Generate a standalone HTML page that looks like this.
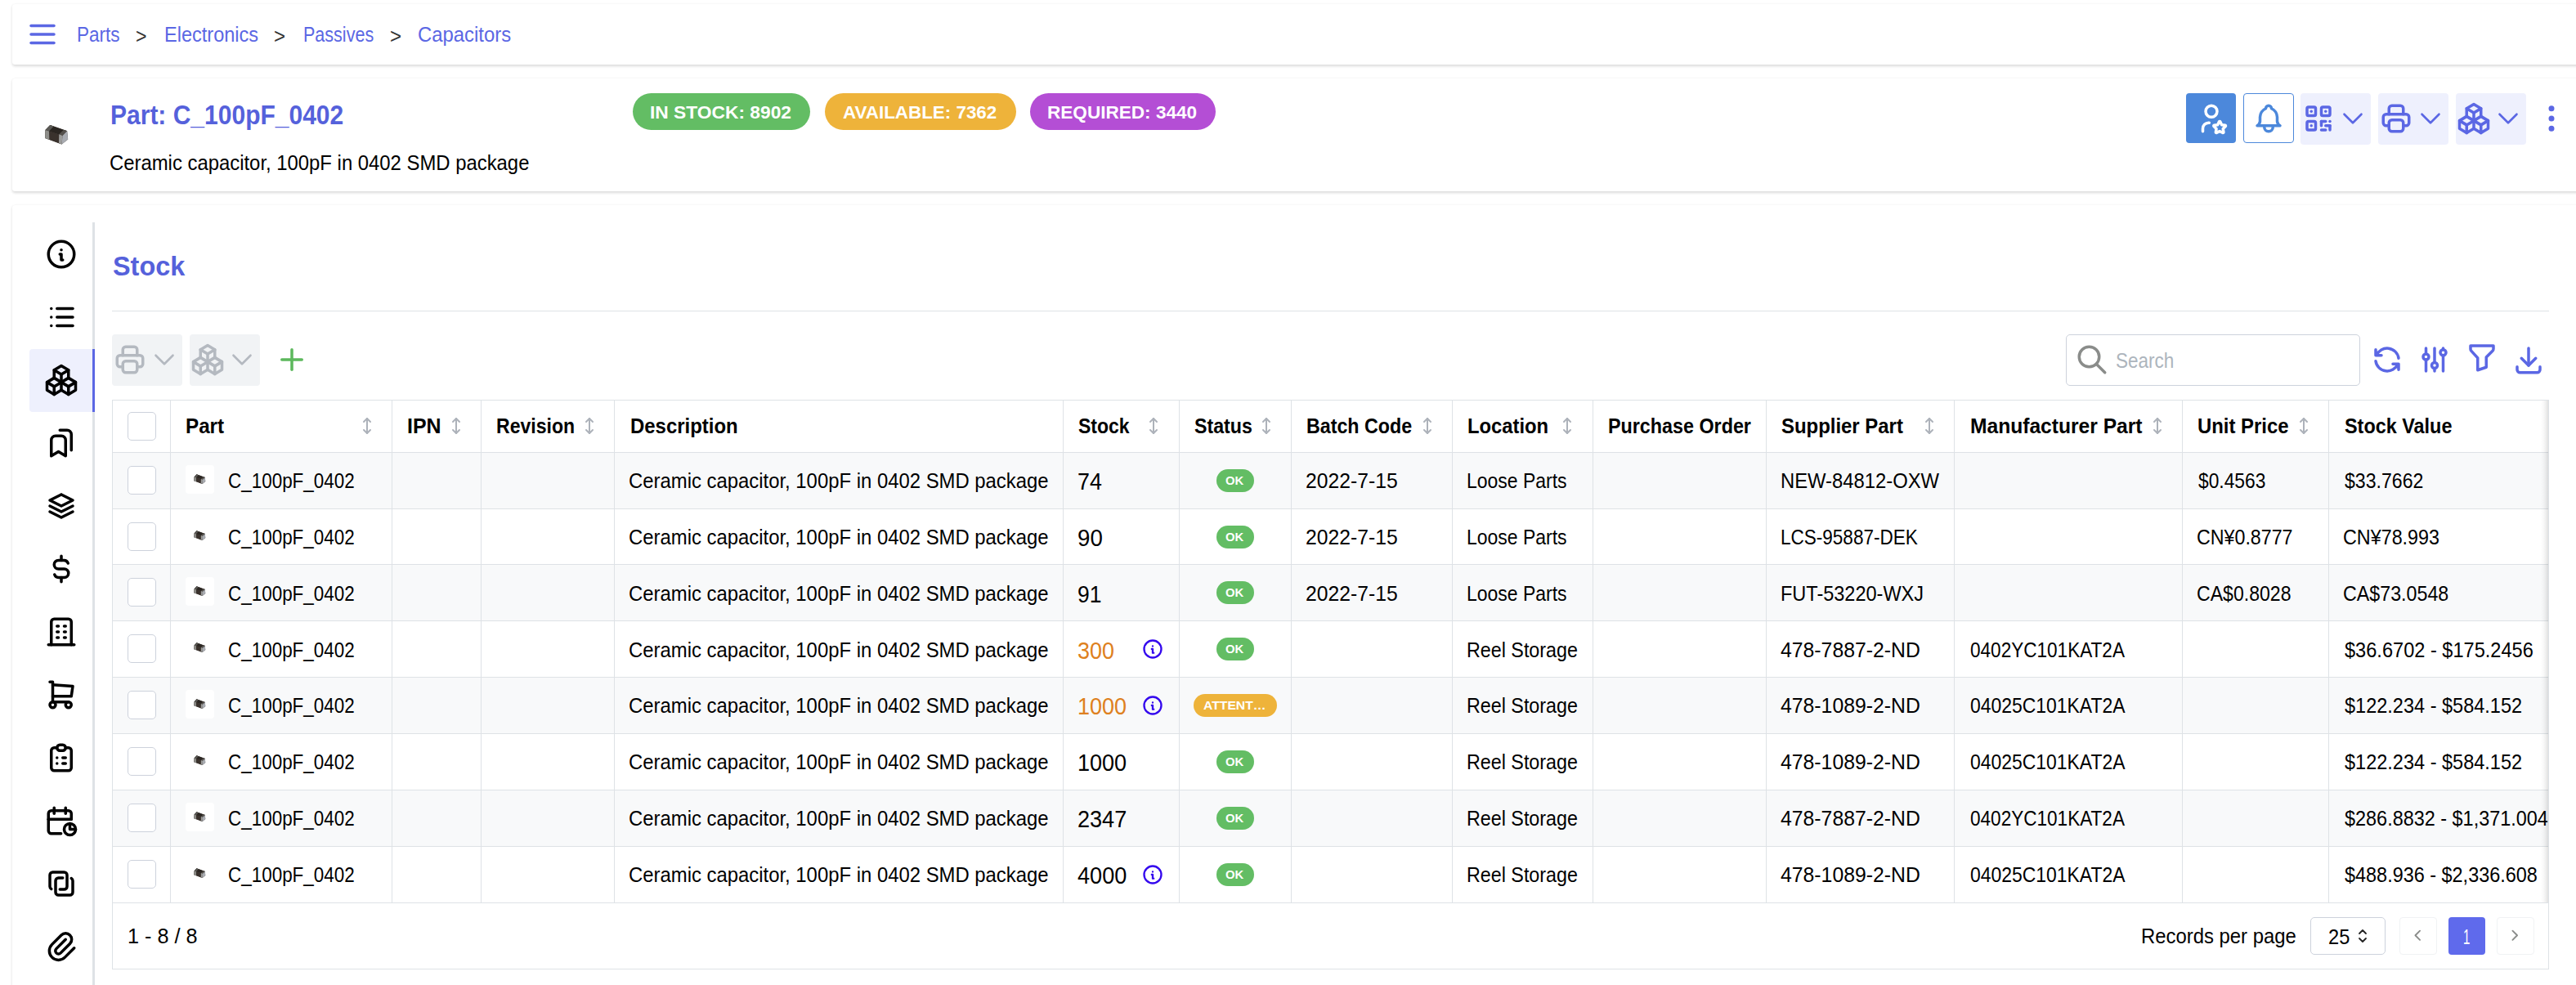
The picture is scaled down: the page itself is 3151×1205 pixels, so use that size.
<!DOCTYPE html>
<html lang="en"><head><meta charset="utf-8"><title>Part: C_100pF_0402 | Stock</title>
<style>
html,body{margin:0;padding:0}
html{background:#fff}
body{width:3151px;height:1205px;background:#fff;font-family:"Liberation Sans",sans-serif;color:#000}
#app{position:relative;width:3151px;height:1205px;overflow:hidden;background:#fff}
.t{position:absolute;white-space:nowrap;transform-origin:0 0;display:block}
.ic{position:absolute;display:block;overflow:visible}
.b{position:absolute;box-sizing:border-box}
.paper{position:absolute;background:#fff;border-radius:3.5px;box-shadow:0 1.5px 4.5px rgba(0,0,0,.05),0 1.5px 3px rgba(0,0,0,.1)}
</style></head><body><div id="app">

<div class="paper" style="left:15.2px;top:4.6px;width:3200px;height:74.2px"></div>
<div class="paper" style="left:15.2px;top:95.8px;width:3200px;height:138px"></div>
<div class="paper" style="left:15.2px;top:251.3px;width:3200px;height:1000px"></div>
<nav>
<svg class="ic" style="left:30.75px;top:21.00px" width="42.00" height="42.00" viewBox="0 0 24 24" fill="none" stroke="#5b67e4" stroke-width="2" stroke-linecap="round" stroke-linejoin="round"><path d="M4 6l16 0"/><path d="M4 12l16 0"/><path d="M4 18l16 0"/></svg>
<span class="t" style="left:93.70px;top:30px;font-size:25px;line-height:25px;color:#5b67e4;transform:scaleX(0.9006)">Parts</span>
<span class="t" style="left:166.08px;top:32px;font-size:25px;line-height:25px;color:#333;transform:scaleX(0.9231)">&gt;</span>
<span class="t" style="left:200.72px;top:30px;font-size:25px;line-height:25px;color:#5b67e4;transform:scaleX(0.9410)">Electronics</span>
<span class="t" style="left:335.34px;top:32px;font-size:25px;line-height:25px;color:#333;transform:scaleX(0.9615)">&gt;</span>
<span class="t" style="left:370.88px;top:30px;font-size:25px;line-height:25px;color:#5b67e4;transform:scaleX(0.8612)">Passives</span>
<span class="t" style="left:476.54px;top:32px;font-size:25px;line-height:25px;color:#333;transform:scaleX(0.9615)">&gt;</span>
<span class="t" style="left:510.54px;top:30px;font-size:25px;line-height:25px;color:#5b67e4;transform:scaleX(0.9551)">Capacitors</span>
</nav>
<header>
<svg class="ic" style="left:40.00px;top:140.00px" width="60.00" height="50.00" viewBox="0 0 60 50"><polygon points="21.32,12.94 42.13,20.30 43.15,30.46 35.53,36.55 15.23,28.93 15.23,19.04" fill="#4a4540"/><polygon points="21.32,12.94 42.13,20.30 36.55,25.89 15.74,19.04" fill="#2b2622"/><polygon points="21.32,12.94 25.63,14.47 20.05,20.56 15.74,19.04" fill="#5b5a56"/><polygon points="37.82,18.78 42.13,20.30 36.55,25.89 32.23,24.37" fill="#54504b"/><polygon points="15.74,19.04 36.55,25.89 35.53,36.55 15.23,28.93" fill="#3a322d"/><polygon points="15.23,19.04 20.05,20.56 20.30,30.96 15.23,28.93" fill="#8e8e8a"/><polygon points="32.23,24.37 36.55,25.89 35.53,36.55 31.98,35.03" fill="#9c9c9a"/><polygon points="36.55,25.89 42.13,20.30 43.15,30.46 35.53,36.55" fill="#a9acb2"/></svg>
<div class="b" style="left:774.00px;top:113.75px;width:217.00px;height:45.00px;background:#63bd64;border-radius:23px"></div>
<div class="b" style="left:1009.00px;top:113.75px;width:233.90px;height:45.00px;background:#eeb33a;border-radius:23px"></div>
<div class="b" style="left:1260.20px;top:113.75px;width:226.55px;height:45.00px;background:#b44ed5;border-radius:23px"></div>
<div class="b" style="left:2674.00px;top:113.90px;width:61.00px;height:61.10px;background:#4c88db;border-radius:4px"></div>
<svg class="ic" style="left:2683.50px;top:124.00px" width="42.00" height="42.00" viewBox="0 0 24 24" fill="none" stroke="#fff" stroke-width="2" stroke-linecap="round" stroke-linejoin="round"><path d="M8 7a4 4 0 1 0 8 0a4 4 0 0 0 -8 0"/><path d="M6 21v-2a4 4 0 0 1 4 -4h.5"/><path d="M17.8 20.817l-2.172 1.138a.392 .392 0 0 1 -.568 -.41l.415 -2.411l-1.757 -1.707a.389 .389 0 0 1 .217 -.665l2.428 -.352l1.086 -2.193a.392 .392 0 0 1 .702 0l1.086 2.193l2.428 .352a.39 .39 0 0 1 .217 .665l-1.757 1.707l.414 2.41a.39 .39 0 0 1 -.567 .411l-2.172 -1.138z"/></svg>
<div class="b" style="left:2744.00px;top:113.90px;width:62.00px;height:61.10px;background:#fff;border:1.5px solid #4c88db;border-radius:4px"></div>
<svg class="ic" style="left:2754.00px;top:124.00px" width="42.00" height="42.00" viewBox="0 0 24 24" fill="none" stroke="#4c88db" stroke-width="2" stroke-linecap="round" stroke-linejoin="round"><path d="M10 5a2 2 0 1 1 4 0a7 7 0 0 1 4 6v3a4 4 0 0 0 2 3h-16a4 4 0 0 0 2 -3v-3a7 7 0 0 1 4 -6"/><path d="M9 17v1a3 3 0 0 0 6 0v-1"/></svg>
<div class="b" style="left:2814.00px;top:113.75px;width:86.00px;height:63.00px;background:#eef0fd;border-radius:4px"></div>
<svg class="ic" style="left:2815.00px;top:124.00px" width="42.00" height="42.00" viewBox="0 0 24 24" fill="none" stroke="#5b67e4" stroke-width="2" stroke-linecap="round" stroke-linejoin="round"><path d="M4 4m0 1a1 1 0 0 1 1 -1h4a1 1 0 0 1 1 1v4a1 1 0 0 1 -1 1h-4a1 1 0 0 1 -1 -1z"/><path d="M7 17l0 .01"/><path d="M14 4m0 1a1 1 0 0 1 1 -1h4a1 1 0 0 1 1 1v4a1 1 0 0 1 -1 1h-4a1 1 0 0 1 -1 -1z"/><path d="M7 7l0 .01"/><path d="M4 14m0 1a1 1 0 0 1 1 -1h4a1 1 0 0 1 1 1v4a1 1 0 0 1 -1 1h-4a1 1 0 0 1 -1 -1z"/><path d="M17 7l0 .01"/><path d="M14 14l3 0"/><path d="M20 14l0 .01"/><path d="M14 14l0 3"/><path d="M14 20l3 0"/><path d="M17 17l3 0"/><path d="M20 17l0 3"/></svg>
<svg class="ic" style="left:2856.80px;top:124.00px" width="42.00" height="42.00" viewBox="0 0 24 24" fill="none" stroke="#5b67e4" stroke-width="1.5" stroke-linecap="round" stroke-linejoin="round"><path d="M6 9l6 6l6 -6"/></svg>
<div class="b" style="left:2909.00px;top:113.75px;width:86.00px;height:63.00px;background:#eef0fd;border-radius:4px"></div>
<svg class="ic" style="left:2910.00px;top:124.00px" width="42.00" height="42.00" viewBox="0 0 24 24" fill="none" stroke="#5b67e4" stroke-width="2" stroke-linecap="round" stroke-linejoin="round"><path d="M17 17h2a2 2 0 0 0 2 -2v-4a2 2 0 0 0 -2 -2h-14a2 2 0 0 0 -2 2v4a2 2 0 0 0 2 2h2"/><path d="M17 9v-4a2 2 0 0 0 -2 -2h-6a2 2 0 0 0 -2 2v4"/><path d="M7 13m0 2a2 2 0 0 1 2 -2h6a2 2 0 0 1 2 2v4a2 2 0 0 1 -2 2h-6a2 2 0 0 1 -2 -2z"/></svg>
<svg class="ic" style="left:2951.80px;top:124.00px" width="42.00" height="42.00" viewBox="0 0 24 24" fill="none" stroke="#5b67e4" stroke-width="1.5" stroke-linecap="round" stroke-linejoin="round"><path d="M6 9l6 6l6 -6"/></svg>
<div class="b" style="left:3004.00px;top:113.75px;width:86.00px;height:63.00px;background:#eef0fd;border-radius:4px"></div>
<svg class="ic" style="left:3005.00px;top:124.00px" width="42.00" height="42.00" viewBox="0 0 24 24" fill="none" stroke="#5b67e4" stroke-width="2" stroke-linecap="round" stroke-linejoin="round"><path d="M7 16.5l-5 -3l5 -3l5 3v5.5l-5 3z"/><path d="M2 13.5v5.5l5 3"/><path d="M7 16.545l5 -3.03"/><path d="M17 16.5l-5 -3l5 -3l5 3v5.5l-5 3z"/><path d="M12 19l5 3"/><path d="M17 16.5l5 -3"/><path d="M12 13.5v-5.5l-5 -3l5 -3l5 3v5.5"/><path d="M7 5.03v5.455"/><path d="M12 8l5 -3"/></svg>
<svg class="ic" style="left:3046.80px;top:124.00px" width="42.00" height="42.00" viewBox="0 0 24 24" fill="none" stroke="#5b67e4" stroke-width="1.5" stroke-linecap="round" stroke-linejoin="round"><path d="M6 9l6 6l6 -6"/></svg>
<svg class="ic" style="left:3099.75px;top:124.00px" width="42.00" height="42.00" viewBox="0 0 24 24" fill="none" stroke="#5b67e4" stroke-width="2" stroke-linecap="round" stroke-linejoin="round"><path d="M12 12m-1 0a1 1 0 1 0 2 0a1 1 0 1 0 -2 0"/><path d="M12 19m-1 0a1 1 0 1 0 2 0a1 1 0 1 0 -2 0"/><path d="M12 5m-1 0a1 1 0 1 0 2 0a1 1 0 1 0 -2 0"/></svg>
<span class="t" style="left:134.58px;top:124px;font-size:33px;line-height:33px;font-weight:700;color:#5561db;transform:scaleX(0.9093)">Part: C_100pF_0402</span>
<span class="t" style="left:133.55px;top:187px;font-size:25px;line-height:25px;transform:scaleX(0.9547)">Ceramic capacitor, 100pF in 0402 SMD package</span>
<span class="t" style="left:795.46px;top:127px;font-size:22px;line-height:22px;font-weight:700;color:#fff;transform:scaleX(1.0352)">IN STOCK: 8902</span>
<span class="t" style="left:1031.00px;top:127px;font-size:22px;line-height:22px;font-weight:700;color:#fff;transform:scaleX(1.0175)">AVAILABLE: 7362</span>
<span class="t" style="left:1281.47px;top:127px;font-size:22px;line-height:22px;font-weight:700;color:#fff;transform:scaleX(1.0256)">REQUIRED: 3440</span>
</header>
<aside>
<div class="b" style="left:113.00px;top:272.00px;width:3.00px;height:988.00px;background:#dee2e6"></div>
<div class="b" style="left:36.00px;top:427.00px;width:77.00px;height:77.00px;background:#eef0fd;border-radius:4px 0 0 4px"></div>
<div class="b" style="left:113.00px;top:427.00px;width:3.00px;height:77.00px;background:#5b67e4"></div>
<svg class="ic" style="left:54.00px;top:289.60px" width="42.00" height="42.00" viewBox="0 0 24 24" fill="none" stroke="#000" stroke-width="2" stroke-linecap="round" stroke-linejoin="round"><path d="M3 12a9 9 0 1 0 18 0a9 9 0 0 0 -18 0"/><path d="M12 9h.01"/><path d="M11 12h1v4h1"/></svg>
<svg class="ic" style="left:54.00px;top:366.67px" width="42.00" height="42.00" viewBox="0 0 24 24" fill="none" stroke="#000" stroke-width="2" stroke-linecap="round" stroke-linejoin="round"><path d="M9 6l11 0"/><path d="M9 12l11 0"/><path d="M9 18l11 0"/><path d="M5 6l0 .01"/><path d="M5 12l0 .01"/><path d="M5 18l0 .01"/></svg>
<svg class="ic" style="left:54.00px;top:443.74px" width="42.00" height="42.00" viewBox="0 0 24 24" fill="none" stroke="#000" stroke-width="2" stroke-linecap="round" stroke-linejoin="round"><path d="M7 16.5l-5 -3l5 -3l5 3v5.5l-5 3z"/><path d="M2 13.5v5.5l5 3"/><path d="M7 16.545l5 -3.03"/><path d="M17 16.5l-5 -3l5 -3l5 3v5.5l-5 3z"/><path d="M12 19l5 3"/><path d="M17 16.5l5 -3"/><path d="M12 13.5v-5.5l-5 -3l5 -3l5 3v5.5"/><path d="M7 5.03v5.455"/><path d="M12 8l5 -3"/></svg>
<svg class="ic" style="left:54.00px;top:520.81px" width="42.00" height="42.00" viewBox="0 0 24 24" fill="none" stroke="#000" stroke-width="2" stroke-linecap="round" stroke-linejoin="round"><path d="M15 10v11l-5 -3l-5 3v-11a3 3 0 0 1 3 -3h4a3 3 0 0 1 3 3z"/><path d="M11 3h5a3 3 0 0 1 3 3v11"/></svg>
<svg class="ic" style="left:54.00px;top:597.88px" width="42.00" height="42.00" viewBox="0 0 24 24" fill="none" stroke="#000" stroke-width="2" stroke-linecap="round" stroke-linejoin="round"><path d="M12 4l-8 4l8 4l8 -4l-8 -4"/><path d="M4 12l8 4l8 -4"/><path d="M4 16l8 4l8 -4"/></svg>
<svg class="ic" style="left:54.00px;top:674.95px" width="42.00" height="42.00" viewBox="0 0 24 24" fill="none" stroke="#000" stroke-width="2" stroke-linecap="round" stroke-linejoin="round"><path d="M16.7 8a3 3 0 0 0 -2.7 -2h-4a3 3 0 0 0 0 6h4a3 3 0 0 1 0 6h-4a3 3 0 0 1 -2.7 -2"/><path d="M12 3v3m0 12v3"/></svg>
<svg class="ic" style="left:54.00px;top:752.02px" width="42.00" height="42.00" viewBox="0 0 24 24" fill="none" stroke="#000" stroke-width="2" stroke-linecap="round" stroke-linejoin="round"><path d="M3 21l18 0"/><path d="M9 8l1 0"/><path d="M9 12l1 0"/><path d="M9 16l1 0"/><path d="M14 8l1 0"/><path d="M14 12l1 0"/><path d="M14 16l1 0"/><path d="M5 21v-16a2 2 0 0 1 2 -2h10a2 2 0 0 1 2 2v16"/></svg>
<svg class="ic" style="left:54.00px;top:829.09px" width="42.00" height="42.00" viewBox="0 0 24 24" fill="none" stroke="#000" stroke-width="2" stroke-linecap="round" stroke-linejoin="round"><path d="M6 19m-2 0a2 2 0 1 0 4 0a2 2 0 1 0 -4 0"/><path d="M17 19m-2 0a2 2 0 1 0 4 0a2 2 0 1 0 -4 0"/><path d="M17 17h-11v-14h-2"/><path d="M6 5l14 1l-1 7h-13"/></svg>
<svg class="ic" style="left:54.00px;top:906.16px" width="42.00" height="42.00" viewBox="0 0 24 24" fill="none" stroke="#000" stroke-width="2" stroke-linecap="round" stroke-linejoin="round"><path d="M9 5h-2a2 2 0 0 0 -2 2v12a2 2 0 0 0 2 2h10a2 2 0 0 0 2 -2v-12a2 2 0 0 0 -2 -2h-2"/><path d="M9 3m0 2a2 2 0 0 1 2 -2h2a2 2 0 0 1 2 2v0a2 2 0 0 1 -2 2h-2a2 2 0 0 1 -2 -2z"/><path d="M9 12l.01 0"/><path d="M13 12l2 0"/><path d="M9 16l.01 0"/><path d="M13 16l2 0"/></svg>
<svg class="ic" style="left:54.00px;top:983.23px" width="42.00" height="42.00" viewBox="0 0 24 24" fill="none" stroke="#000" stroke-width="2" stroke-linecap="round" stroke-linejoin="round"><path d="M11.795 21h-6.795a2 2 0 0 1 -2 -2v-12a2 2 0 0 1 2 -2h12a2 2 0 0 1 2 2v4"/><path d="M18 14v4h4"/><path d="M18 18m-4 0a4 4 0 1 0 8 0a4 4 0 1 0 -8 0"/><path d="M15 3v4"/><path d="M7 3v4"/><path d="M3 11h16"/></svg>
<svg class="ic" style="left:54.00px;top:1060.30px" width="42.00" height="42.00" viewBox="0 0 24 24" fill="none" stroke="#000" stroke-width="2" stroke-linecap="round" stroke-linejoin="round"><path d="M19 8.268a2 2 0 0 1 1 1.732v8a2 2 0 0 1 -2 2h-8a2 2 0 0 1 -2 -2v-8a2 2 0 0 1 2 -2h3"/><path d="M5 15.734a2 2 0 0 1 -1 -1.734v-8a2 2 0 0 1 2 -2h8a2 2 0 0 1 2 2v8a2 2 0 0 1 -2 2h-3"/></svg>
<svg class="ic" style="left:54.00px;top:1137.37px" width="42.00" height="42.00" viewBox="0 0 24 24" fill="none" stroke="#000" stroke-width="2" stroke-linecap="round" stroke-linejoin="round"><path d="M15 7l-6.5 6.5a1.5 1.5 0 0 0 3 3l6.5 -6.5a3 3 0 0 0 -6 -6l-6.5 6.5a4.5 4.5 0 0 0 9 9l6.5 -6.5"/></svg>
</aside>
<main>
<div class="b" style="left:137.00px;top:380.00px;width:2981.00px;height:1.00px;background:#dee2e6"></div>
<div class="b" style="left:137.00px;top:409.00px;width:86.00px;height:62.75px;background:#f1f3f5;border-radius:4px"></div>
<svg class="ic" style="left:138.00px;top:419.00px" width="42.00" height="42.00" viewBox="0 0 24 24" fill="none" stroke="#b4b9c0" stroke-width="2" stroke-linecap="round" stroke-linejoin="round"><path d="M17 17h2a2 2 0 0 0 2 -2v-4a2 2 0 0 0 -2 -2h-14a2 2 0 0 0 -2 2v4a2 2 0 0 0 2 2h2"/><path d="M17 9v-4a2 2 0 0 0 -2 -2h-6a2 2 0 0 0 -2 2v4"/><path d="M7 13m0 2a2 2 0 0 1 2 -2h6a2 2 0 0 1 2 2v4a2 2 0 0 1 -2 2h-6a2 2 0 0 1 -2 -2z"/></svg>
<svg class="ic" style="left:179.90px;top:419.00px" width="42.00" height="42.00" viewBox="0 0 24 24" fill="none" stroke="#b4b9c0" stroke-width="1.5" stroke-linecap="round" stroke-linejoin="round"><path d="M6 9l6 6l6 -6"/></svg>
<div class="b" style="left:232.00px;top:409.00px;width:86.00px;height:62.75px;background:#f1f3f5;border-radius:4px"></div>
<svg class="ic" style="left:233.00px;top:419.00px" width="42.00" height="42.00" viewBox="0 0 24 24" fill="none" stroke="#b4b9c0" stroke-width="2" stroke-linecap="round" stroke-linejoin="round"><path d="M7 16.5l-5 -3l5 -3l5 3v5.5l-5 3z"/><path d="M2 13.5v5.5l5 3"/><path d="M7 16.545l5 -3.03"/><path d="M17 16.5l-5 -3l5 -3l5 3v5.5l-5 3z"/><path d="M12 19l5 3"/><path d="M17 16.5l5 -3"/><path d="M12 13.5v-5.5l-5 -3l5 -3l5 3v5.5"/><path d="M7 5.03v5.455"/><path d="M12 8l5 -3"/></svg>
<svg class="ic" style="left:274.90px;top:419.00px" width="42.00" height="42.00" viewBox="0 0 24 24" fill="none" stroke="#b4b9c0" stroke-width="1.5" stroke-linecap="round" stroke-linejoin="round"><path d="M6 9l6 6l6 -6"/></svg>
<svg class="ic" style="left:336.00px;top:419.00px" width="42.00" height="42.00" viewBox="0 0 24 24" fill="none" stroke="#5cb85c" stroke-width="2" stroke-linecap="round" stroke-linejoin="round"><path d="M12 5l0 14"/><path d="M5 12l14 0"/></svg>
<div class="b" style="left:2527.00px;top:409.00px;width:360.00px;height:63.00px;background:#fff;border:1px solid #cdd2dc;border-radius:5px"></div>
<svg class="ic" style="left:2538.00px;top:418.75px" width="42.00" height="42.00" viewBox="0 0 24 24" fill="none" stroke="#8a8c8a" stroke-width="2" stroke-linecap="round" stroke-linejoin="round"><path d="M10 10m-7 0a7 7 0 1 0 14 0a7 7 0 1 0 -14 0"/><path d="M21 21l-6 -6"/></svg>
<svg class="ic" style="left:2899.00px;top:419.00px" width="42.00" height="42.00" viewBox="0 0 24 24" fill="none" stroke="#5b67e4" stroke-width="2" stroke-linecap="round" stroke-linejoin="round"><path d="M20 11a8.1 8.1 0 0 0 -15.5 -2m-.5 -4v4h4"/><path d="M4 13a8.1 8.1 0 0 0 15.5 2m.5 4v-4h-4"/></svg>
<svg class="ic" style="left:2957.00px;top:419.00px" width="42.00" height="42.00" viewBox="0 0 24 24" fill="none" stroke="#5b67e4" stroke-width="2" stroke-linecap="round" stroke-linejoin="round"><path d="M4 10a2 2 0 1 0 4 0a2 2 0 0 0 -4 0"/><path d="M6 4v4"/><path d="M6 12v8"/><path d="M10 16a2 2 0 1 0 4 0a2 2 0 0 0 -4 0"/><path d="M12 4v10"/><path d="M12 18v2"/><path d="M16 7a2 2 0 1 0 4 0a2 2 0 0 0 -4 0"/><path d="M18 4v1"/><path d="M18 9v11"/></svg>
<svg class="ic" style="left:3015.00px;top:416.20px" width="42.00" height="42.00" viewBox="0 0 24 24" fill="none" stroke="#5b67e4" stroke-width="2" stroke-linecap="round" stroke-linejoin="round"><path d="M4 4h16v2.172a2 2 0 0 1 -.586 1.414l-4.414 4.414v7l-6 2v-8.5l-4.446 -4.891a2 2 0 0 1 -.554 -1.384v-2.225z"/></svg>
<svg class="ic" style="left:3072.00px;top:419.00px" width="42.00" height="42.00" viewBox="0 0 24 24" fill="none" stroke="#5b67e4" stroke-width="2" stroke-linecap="round" stroke-linejoin="round"><path d="M4 17v2a2 2 0 0 0 2 2h12a2 2 0 0 0 2 -2v-2"/><path d="M7 11l5 5l5 -5"/><path d="M12 4l0 12"/></svg>
<div class="b" style="left:137.00px;top:554.00px;width:2981.00px;height:68.00px;background:#f8f9fa"></div>
<div class="b" style="left:137.00px;top:691.00px;width:2981.00px;height:68.00px;background:#f8f9fa"></div>
<div class="b" style="left:137.00px;top:829.00px;width:2981.00px;height:68.00px;background:#f8f9fa"></div>
<div class="b" style="left:137.00px;top:967.00px;width:2981.00px;height:68.00px;background:#f8f9fa"></div>
<div class="b" style="left:137.00px;top:553.00px;width:2981.00px;height:1.00px;background:#dee2e6"></div>
<div class="b" style="left:137.00px;top:622.00px;width:2981.00px;height:1.00px;background:#dee2e6"></div>
<div class="b" style="left:137.00px;top:690.00px;width:2981.00px;height:1.00px;background:#dee2e6"></div>
<div class="b" style="left:137.00px;top:759.00px;width:2981.00px;height:1.00px;background:#dee2e6"></div>
<div class="b" style="left:137.00px;top:828.00px;width:2981.00px;height:1.00px;background:#dee2e6"></div>
<div class="b" style="left:137.00px;top:897.00px;width:2981.00px;height:1.00px;background:#dee2e6"></div>
<div class="b" style="left:137.00px;top:966.00px;width:2981.00px;height:1.00px;background:#dee2e6"></div>
<div class="b" style="left:137.00px;top:1035.00px;width:2981.00px;height:1.00px;background:#dee2e6"></div>
<div class="b" style="left:137.00px;top:1104.00px;width:2981.00px;height:1.00px;background:#dee2e6"></div>
<div class="b" style="left:208.00px;top:489.00px;width:1.00px;height:615.00px;background:#dee2e6"></div>
<div class="b" style="left:479.00px;top:489.00px;width:1.00px;height:615.00px;background:#dee2e6"></div>
<div class="b" style="left:588.00px;top:489.00px;width:1.00px;height:615.00px;background:#dee2e6"></div>
<div class="b" style="left:751.00px;top:489.00px;width:1.00px;height:615.00px;background:#dee2e6"></div>
<div class="b" style="left:1300.00px;top:489.00px;width:1.00px;height:615.00px;background:#dee2e6"></div>
<div class="b" style="left:1442.00px;top:489.00px;width:1.00px;height:615.00px;background:#dee2e6"></div>
<div class="b" style="left:1579.00px;top:489.00px;width:1.00px;height:615.00px;background:#dee2e6"></div>
<div class="b" style="left:1776.00px;top:489.00px;width:1.00px;height:615.00px;background:#dee2e6"></div>
<div class="b" style="left:1948.00px;top:489.00px;width:1.00px;height:615.00px;background:#dee2e6"></div>
<div class="b" style="left:2160.00px;top:489.00px;width:1.00px;height:615.00px;background:#dee2e6"></div>
<div class="b" style="left:2390.00px;top:489.00px;width:1.00px;height:615.00px;background:#dee2e6"></div>
<div class="b" style="left:2669.00px;top:489.00px;width:1.00px;height:615.00px;background:#dee2e6"></div>
<div class="b" style="left:2848.00px;top:489.00px;width:1.00px;height:615.00px;background:#dee2e6"></div>
<div class="b" style="left:3108.00px;top:490.00px;width:9.00px;height:614.00px;background:linear-gradient(to right, rgba(0,0,0,0), rgba(0,0,0,.025) 35%, rgba(0,0,0,.06) 65%, rgba(0,0,0,.12))"></div>
<div class="b" style="left:137.00px;top:489.00px;width:2981.00px;height:697.00px;border:1px solid #dee2e6"></div>
<div class="b" style="left:156.00px;top:504.00px;width:35.00px;height:35.00px;background:#fff;border:1px solid #cdd2dc;border-radius:5px"></div>
<svg class="ic" style="left:437.00px;top:509.00px" width="24.00" height="24.00" viewBox="0 0 24 24" fill="none" stroke="#adb2ba" stroke-width="2" stroke-linecap="round" stroke-linejoin="round"><path d="M8 7l4 -4l4 4"/><path d="M8 17l4 4l4 -4"/><path d="M12 3l0 18"/></svg>
<svg class="ic" style="left:546.00px;top:509.00px" width="24.00" height="24.00" viewBox="0 0 24 24" fill="none" stroke="#adb2ba" stroke-width="2" stroke-linecap="round" stroke-linejoin="round"><path d="M8 7l4 -4l4 4"/><path d="M8 17l4 4l4 -4"/><path d="M12 3l0 18"/></svg>
<svg class="ic" style="left:708.75px;top:509.00px" width="24.00" height="24.00" viewBox="0 0 24 24" fill="none" stroke="#adb2ba" stroke-width="2" stroke-linecap="round" stroke-linejoin="round"><path d="M8 7l4 -4l4 4"/><path d="M8 17l4 4l4 -4"/><path d="M12 3l0 18"/></svg>
<svg class="ic" style="left:1399.00px;top:509.00px" width="24.00" height="24.00" viewBox="0 0 24 24" fill="none" stroke="#adb2ba" stroke-width="2" stroke-linecap="round" stroke-linejoin="round"><path d="M8 7l4 -4l4 4"/><path d="M8 17l4 4l4 -4"/><path d="M12 3l0 18"/></svg>
<svg class="ic" style="left:1537.00px;top:509.00px" width="24.00" height="24.00" viewBox="0 0 24 24" fill="none" stroke="#adb2ba" stroke-width="2" stroke-linecap="round" stroke-linejoin="round"><path d="M8 7l4 -4l4 4"/><path d="M8 17l4 4l4 -4"/><path d="M12 3l0 18"/></svg>
<svg class="ic" style="left:1734.00px;top:509.00px" width="24.00" height="24.00" viewBox="0 0 24 24" fill="none" stroke="#adb2ba" stroke-width="2" stroke-linecap="round" stroke-linejoin="round"><path d="M8 7l4 -4l4 4"/><path d="M8 17l4 4l4 -4"/><path d="M12 3l0 18"/></svg>
<svg class="ic" style="left:1905.25px;top:509.00px" width="24.00" height="24.00" viewBox="0 0 24 24" fill="none" stroke="#adb2ba" stroke-width="2" stroke-linecap="round" stroke-linejoin="round"><path d="M8 7l4 -4l4 4"/><path d="M8 17l4 4l4 -4"/><path d="M12 3l0 18"/></svg>
<svg class="ic" style="left:2348.00px;top:509.00px" width="24.00" height="24.00" viewBox="0 0 24 24" fill="none" stroke="#adb2ba" stroke-width="2" stroke-linecap="round" stroke-linejoin="round"><path d="M8 7l4 -4l4 4"/><path d="M8 17l4 4l4 -4"/><path d="M12 3l0 18"/></svg>
<svg class="ic" style="left:2626.75px;top:509.00px" width="24.00" height="24.00" viewBox="0 0 24 24" fill="none" stroke="#adb2ba" stroke-width="2" stroke-linecap="round" stroke-linejoin="round"><path d="M8 7l4 -4l4 4"/><path d="M8 17l4 4l4 -4"/><path d="M12 3l0 18"/></svg>
<svg class="ic" style="left:2805.75px;top:509.00px" width="24.00" height="24.00" viewBox="0 0 24 24" fill="none" stroke="#adb2ba" stroke-width="2" stroke-linecap="round" stroke-linejoin="round"><path d="M8 7l4 -4l4 4"/><path d="M8 17l4 4l4 -4"/><path d="M12 3l0 18"/></svg>
<div class="b" style="left:156.00px;top:570.00px;width:35.00px;height:35.00px;background:#fff;border:1px solid #cdd2dc;border-radius:5px"></div>
<div class="b" style="left:227.00px;top:569.00px;width:35.00px;height:35.00px;background:#fff;border-radius:4px"></div>
<svg class="ic" style="left:229.81px;top:574.38px" width="29.57" height="24.64" viewBox="0 0 60 50"><polygon points="21.32,12.94 42.13,20.30 43.15,30.46 35.53,36.55 15.23,28.93 15.23,19.04" fill="#4a4540"/><polygon points="21.32,12.94 42.13,20.30 36.55,25.89 15.74,19.04" fill="#2b2622"/><polygon points="21.32,12.94 25.63,14.47 20.05,20.56 15.74,19.04" fill="#5b5a56"/><polygon points="37.82,18.78 42.13,20.30 36.55,25.89 32.23,24.37" fill="#54504b"/><polygon points="15.74,19.04 36.55,25.89 35.53,36.55 15.23,28.93" fill="#3a322d"/><polygon points="15.23,19.04 20.05,20.56 20.30,30.96 15.23,28.93" fill="#8e8e8a"/><polygon points="32.23,24.37 36.55,25.89 35.53,36.55 31.98,35.03" fill="#9c9c9a"/><polygon points="36.55,25.89 42.13,20.30 43.15,30.46 35.53,36.55" fill="#a9acb2"/></svg>
<div class="b" style="left:1488.00px;top:574.00px;width:46.00px;height:28.00px;background:#63bd64;border-radius:14px"></div>
<div class="b" style="left:156.00px;top:638.50px;width:35.00px;height:35.00px;background:#fff;border:1px solid #cdd2dc;border-radius:5px"></div>
<svg class="ic" style="left:229.81px;top:642.88px" width="29.57" height="24.64" viewBox="0 0 60 50"><polygon points="21.32,12.94 42.13,20.30 43.15,30.46 35.53,36.55 15.23,28.93 15.23,19.04" fill="#4a4540"/><polygon points="21.32,12.94 42.13,20.30 36.55,25.89 15.74,19.04" fill="#2b2622"/><polygon points="21.32,12.94 25.63,14.47 20.05,20.56 15.74,19.04" fill="#5b5a56"/><polygon points="37.82,18.78 42.13,20.30 36.55,25.89 32.23,24.37" fill="#54504b"/><polygon points="15.74,19.04 36.55,25.89 35.53,36.55 15.23,28.93" fill="#3a322d"/><polygon points="15.23,19.04 20.05,20.56 20.30,30.96 15.23,28.93" fill="#8e8e8a"/><polygon points="32.23,24.37 36.55,25.89 35.53,36.55 31.98,35.03" fill="#9c9c9a"/><polygon points="36.55,25.89 42.13,20.30 43.15,30.46 35.53,36.55" fill="#a9acb2"/></svg>
<div class="b" style="left:1488.00px;top:642.50px;width:46.00px;height:28.00px;background:#63bd64;border-radius:14px"></div>
<div class="b" style="left:156.00px;top:707.00px;width:35.00px;height:35.00px;background:#fff;border:1px solid #cdd2dc;border-radius:5px"></div>
<div class="b" style="left:227.00px;top:706.00px;width:35.00px;height:35.00px;background:#fff;border-radius:4px"></div>
<svg class="ic" style="left:229.81px;top:711.38px" width="29.57" height="24.64" viewBox="0 0 60 50"><polygon points="21.32,12.94 42.13,20.30 43.15,30.46 35.53,36.55 15.23,28.93 15.23,19.04" fill="#4a4540"/><polygon points="21.32,12.94 42.13,20.30 36.55,25.89 15.74,19.04" fill="#2b2622"/><polygon points="21.32,12.94 25.63,14.47 20.05,20.56 15.74,19.04" fill="#5b5a56"/><polygon points="37.82,18.78 42.13,20.30 36.55,25.89 32.23,24.37" fill="#54504b"/><polygon points="15.74,19.04 36.55,25.89 35.53,36.55 15.23,28.93" fill="#3a322d"/><polygon points="15.23,19.04 20.05,20.56 20.30,30.96 15.23,28.93" fill="#8e8e8a"/><polygon points="32.23,24.37 36.55,25.89 35.53,36.55 31.98,35.03" fill="#9c9c9a"/><polygon points="36.55,25.89 42.13,20.30 43.15,30.46 35.53,36.55" fill="#a9acb2"/></svg>
<div class="b" style="left:1488.00px;top:711.00px;width:46.00px;height:28.00px;background:#63bd64;border-radius:14px"></div>
<div class="b" style="left:156.00px;top:776.00px;width:35.00px;height:35.00px;background:#fff;border:1px solid #cdd2dc;border-radius:5px"></div>
<svg class="ic" style="left:229.81px;top:780.38px" width="29.57" height="24.64" viewBox="0 0 60 50"><polygon points="21.32,12.94 42.13,20.30 43.15,30.46 35.53,36.55 15.23,28.93 15.23,19.04" fill="#4a4540"/><polygon points="21.32,12.94 42.13,20.30 36.55,25.89 15.74,19.04" fill="#2b2622"/><polygon points="21.32,12.94 25.63,14.47 20.05,20.56 15.74,19.04" fill="#5b5a56"/><polygon points="37.82,18.78 42.13,20.30 36.55,25.89 32.23,24.37" fill="#54504b"/><polygon points="15.74,19.04 36.55,25.89 35.53,36.55 15.23,28.93" fill="#3a322d"/><polygon points="15.23,19.04 20.05,20.56 20.30,30.96 15.23,28.93" fill="#8e8e8a"/><polygon points="32.23,24.37 36.55,25.89 35.53,36.55 31.98,35.03" fill="#9c9c9a"/><polygon points="36.55,25.89 42.13,20.30 43.15,30.46 35.53,36.55" fill="#a9acb2"/></svg>
<div class="b" style="left:1488.00px;top:780.00px;width:46.00px;height:28.00px;background:#63bd64;border-radius:14px"></div>
<svg class="ic" style="left:1395.90px;top:779.70px" width="28.00" height="28.00" viewBox="0 0 24 24" fill="none" stroke="#3408ee" stroke-width="2" stroke-linecap="round" stroke-linejoin="round"><path d="M3 12a9 9 0 1 0 18 0a9 9 0 0 0 -18 0"/><path d="M12 9h.01"/><path d="M11 12h1v4h1"/></svg>
<div class="b" style="left:156.00px;top:845.00px;width:35.00px;height:35.00px;background:#fff;border:1px solid #cdd2dc;border-radius:5px"></div>
<div class="b" style="left:227.00px;top:844.00px;width:35.00px;height:35.00px;background:#fff;border-radius:4px"></div>
<svg class="ic" style="left:229.81px;top:849.38px" width="29.57" height="24.64" viewBox="0 0 60 50"><polygon points="21.32,12.94 42.13,20.30 43.15,30.46 35.53,36.55 15.23,28.93 15.23,19.04" fill="#4a4540"/><polygon points="21.32,12.94 42.13,20.30 36.55,25.89 15.74,19.04" fill="#2b2622"/><polygon points="21.32,12.94 25.63,14.47 20.05,20.56 15.74,19.04" fill="#5b5a56"/><polygon points="37.82,18.78 42.13,20.30 36.55,25.89 32.23,24.37" fill="#54504b"/><polygon points="15.74,19.04 36.55,25.89 35.53,36.55 15.23,28.93" fill="#3a322d"/><polygon points="15.23,19.04 20.05,20.56 20.30,30.96 15.23,28.93" fill="#8e8e8a"/><polygon points="32.23,24.37 36.55,25.89 35.53,36.55 31.98,35.03" fill="#9c9c9a"/><polygon points="36.55,25.89 42.13,20.30 43.15,30.46 35.53,36.55" fill="#a9acb2"/></svg>
<div class="b" style="left:1460.00px;top:849.00px;width:102.00px;height:28.00px;background:#eeb33a;border-radius:14px"></div>
<svg class="ic" style="left:1395.90px;top:848.70px" width="28.00" height="28.00" viewBox="0 0 24 24" fill="none" stroke="#3408ee" stroke-width="2" stroke-linecap="round" stroke-linejoin="round"><path d="M3 12a9 9 0 1 0 18 0a9 9 0 0 0 -18 0"/><path d="M12 9h.01"/><path d="M11 12h1v4h1"/></svg>
<div class="b" style="left:156.00px;top:914.00px;width:35.00px;height:35.00px;background:#fff;border:1px solid #cdd2dc;border-radius:5px"></div>
<svg class="ic" style="left:229.81px;top:918.38px" width="29.57" height="24.64" viewBox="0 0 60 50"><polygon points="21.32,12.94 42.13,20.30 43.15,30.46 35.53,36.55 15.23,28.93 15.23,19.04" fill="#4a4540"/><polygon points="21.32,12.94 42.13,20.30 36.55,25.89 15.74,19.04" fill="#2b2622"/><polygon points="21.32,12.94 25.63,14.47 20.05,20.56 15.74,19.04" fill="#5b5a56"/><polygon points="37.82,18.78 42.13,20.30 36.55,25.89 32.23,24.37" fill="#54504b"/><polygon points="15.74,19.04 36.55,25.89 35.53,36.55 15.23,28.93" fill="#3a322d"/><polygon points="15.23,19.04 20.05,20.56 20.30,30.96 15.23,28.93" fill="#8e8e8a"/><polygon points="32.23,24.37 36.55,25.89 35.53,36.55 31.98,35.03" fill="#9c9c9a"/><polygon points="36.55,25.89 42.13,20.30 43.15,30.46 35.53,36.55" fill="#a9acb2"/></svg>
<div class="b" style="left:1488.00px;top:918.00px;width:46.00px;height:28.00px;background:#63bd64;border-radius:14px"></div>
<div class="b" style="left:156.00px;top:983.00px;width:35.00px;height:35.00px;background:#fff;border:1px solid #cdd2dc;border-radius:5px"></div>
<div class="b" style="left:227.00px;top:982.00px;width:35.00px;height:35.00px;background:#fff;border-radius:4px"></div>
<svg class="ic" style="left:229.81px;top:987.38px" width="29.57" height="24.64" viewBox="0 0 60 50"><polygon points="21.32,12.94 42.13,20.30 43.15,30.46 35.53,36.55 15.23,28.93 15.23,19.04" fill="#4a4540"/><polygon points="21.32,12.94 42.13,20.30 36.55,25.89 15.74,19.04" fill="#2b2622"/><polygon points="21.32,12.94 25.63,14.47 20.05,20.56 15.74,19.04" fill="#5b5a56"/><polygon points="37.82,18.78 42.13,20.30 36.55,25.89 32.23,24.37" fill="#54504b"/><polygon points="15.74,19.04 36.55,25.89 35.53,36.55 15.23,28.93" fill="#3a322d"/><polygon points="15.23,19.04 20.05,20.56 20.30,30.96 15.23,28.93" fill="#8e8e8a"/><polygon points="32.23,24.37 36.55,25.89 35.53,36.55 31.98,35.03" fill="#9c9c9a"/><polygon points="36.55,25.89 42.13,20.30 43.15,30.46 35.53,36.55" fill="#a9acb2"/></svg>
<div class="b" style="left:1488.00px;top:987.00px;width:46.00px;height:28.00px;background:#63bd64;border-radius:14px"></div>
<div class="b" style="left:156.00px;top:1052.00px;width:35.00px;height:35.00px;background:#fff;border:1px solid #cdd2dc;border-radius:5px"></div>
<svg class="ic" style="left:229.81px;top:1056.38px" width="29.57" height="24.64" viewBox="0 0 60 50"><polygon points="21.32,12.94 42.13,20.30 43.15,30.46 35.53,36.55 15.23,28.93 15.23,19.04" fill="#4a4540"/><polygon points="21.32,12.94 42.13,20.30 36.55,25.89 15.74,19.04" fill="#2b2622"/><polygon points="21.32,12.94 25.63,14.47 20.05,20.56 15.74,19.04" fill="#5b5a56"/><polygon points="37.82,18.78 42.13,20.30 36.55,25.89 32.23,24.37" fill="#54504b"/><polygon points="15.74,19.04 36.55,25.89 35.53,36.55 15.23,28.93" fill="#3a322d"/><polygon points="15.23,19.04 20.05,20.56 20.30,30.96 15.23,28.93" fill="#8e8e8a"/><polygon points="32.23,24.37 36.55,25.89 35.53,36.55 31.98,35.03" fill="#9c9c9a"/><polygon points="36.55,25.89 42.13,20.30 43.15,30.46 35.53,36.55" fill="#a9acb2"/></svg>
<div class="b" style="left:1488.00px;top:1056.00px;width:46.00px;height:28.00px;background:#63bd64;border-radius:14px"></div>
<svg class="ic" style="left:1395.90px;top:1055.70px" width="28.00" height="28.00" viewBox="0 0 24 24" fill="none" stroke="#3408ee" stroke-width="2" stroke-linecap="round" stroke-linejoin="round"><path d="M3 12a9 9 0 1 0 18 0a9 9 0 0 0 -18 0"/><path d="M12 9h.01"/><path d="M11 12h1v4h1"/></svg>
<div class="b" style="left:2826.00px;top:1122.00px;width:92.00px;height:46.00px;background:#fff;border:1px solid #cdd2dc;border-radius:5px"></div>
<svg class="ic" style="left:2878.00px;top:1133.00px" width="24.00" height="24.00" viewBox="0 0 24 24" fill="none" stroke="#222" stroke-width="1.8" stroke-linecap="round" stroke-linejoin="round"><path d="M8 9l4 -4l4 4"/><path d="M16 15l-4 4l-4 -4"/></svg>
<div class="b" style="left:2935.00px;top:1122.00px;width:46.00px;height:46.00px;background:#fff;border:1px solid #f0f2f4;border-radius:4px"></div>
<svg class="ic" style="left:2946.15px;top:1133.25px" width="22.50" height="22.50" viewBox="0 0 24 24" fill="none" stroke="#8a8c8a" stroke-width="2" stroke-linecap="round" stroke-linejoin="round"><path d="M15 6l-6 6l6 6"/></svg>
<div class="b" style="left:2995.00px;top:1122.00px;width:45.00px;height:46.00px;background:#5f6aec;border-radius:4px"></div>
<div class="b" style="left:3054.00px;top:1122.00px;width:46.00px;height:46.00px;background:#fff;border:1px solid #f0f2f4;border-radius:4px"></div>
<svg class="ic" style="left:3065.35px;top:1133.25px" width="22.50" height="22.50" viewBox="0 0 24 24" fill="none" stroke="#8a8c8a" stroke-width="2" stroke-linecap="round" stroke-linejoin="round"><path d="M9 6l6 6l-6 6"/></svg>
<span class="t" style="left:138.20px;top:309px;font-size:33px;line-height:33px;font-weight:700;color:#5561db;transform:scaleX(0.9811)">Stock</span>
<span class="t" style="left:2588.20px;top:429px;font-size:25px;line-height:25px;color:#adb5bd;transform:scaleX(0.9003)">Search</span>
<span class="t" style="left:227.13px;top:509px;font-size:25px;line-height:25px;font-weight:700;transform:scaleX(0.9688)">Part</span>
<span class="t" style="left:498.25px;top:509px;font-size:25px;line-height:25px;font-weight:700;transform:scaleX(0.9970)">IPN</span>
<span class="t" style="left:607.08px;top:509px;font-size:25px;line-height:25px;font-weight:700;transform:scaleX(0.9222)">Revision</span>
<span class="t" style="left:770.59px;top:509px;font-size:25px;line-height:25px;font-weight:700;transform:scaleX(0.9571)">Description</span>
<span class="t" style="left:1319.00px;top:509px;font-size:25px;line-height:25px;font-weight:700;transform:scaleX(0.9204)">Stock</span>
<span class="t" style="left:1461.00px;top:509px;font-size:25px;line-height:25px;font-weight:700;transform:scaleX(0.9272)">Status</span>
<span class="t" style="left:1598.32px;top:509px;font-size:25px;line-height:25px;font-weight:700;transform:scaleX(0.9293)">Batch Code</span>
<span class="t" style="left:1795.05px;top:509px;font-size:25px;line-height:25px;font-weight:700;transform:scaleX(0.9520)">Location</span>
<span class="t" style="left:1966.57px;top:509px;font-size:25px;line-height:25px;font-weight:700;transform:scaleX(0.9325)">Purchase Order</span>
<span class="t" style="left:2179.25px;top:509px;font-size:25px;line-height:25px;font-weight:700;transform:scaleX(0.9567)">Supplier Part</span>
<span class="t" style="left:2409.52px;top:509px;font-size:25px;line-height:25px;font-weight:700;transform:scaleX(0.9842)">Manufacturer Part</span>
<span class="t" style="left:2687.79px;top:509px;font-size:25px;line-height:25px;font-weight:700;transform:scaleX(0.9564)">Unit Price</span>
<span class="t" style="left:2867.50px;top:509px;font-size:25px;line-height:25px;font-weight:700;transform:scaleX(0.9363)">Stock Value</span>
<span class="t" style="left:278.60px;top:576px;font-size:25px;line-height:25px;transform:scaleX(0.8976)">C_100pF_0402</span>
<span class="t" style="left:768.80px;top:576px;font-size:25px;line-height:25px;transform:scaleX(0.9550)">Ceramic capacitor, 100pF in 0402 SMD package</span>
<span class="t" style="left:1318.08px;top:575px;font-size:29px;line-height:29px;transform:scaleX(0.9236)">74</span>
<span class="t" style="left:1597.01px;top:576px;font-size:25px;line-height:25px;transform:scaleX(0.9882)">2022-7-15</span>
<span class="t" style="left:1794.16px;top:576px;font-size:25px;line-height:25px;transform:scaleX(0.9186)">Loose Parts</span>
<span class="t" style="left:2177.60px;top:576px;font-size:25px;line-height:25px;transform:scaleX(0.9522)">NEW-84812-OXW</span>
<span class="t" style="left:2688.75px;top:576px;font-size:25px;line-height:25px;transform:scaleX(0.9110)">$0.4563</span>
<span class="t" style="left:2867.75px;top:576px;font-size:25px;line-height:25px;transform:scaleX(0.9239)">$33.7662</span>
<span class="t" style="left:1499.25px;top:580px;font-size:15.5px;line-height:15.5px;font-weight:700;color:#fff;transform:scaleX(0.9561)">OK</span>
<span class="t" style="left:278.60px;top:645px;font-size:25px;line-height:25px;transform:scaleX(0.8976)">C_100pF_0402</span>
<span class="t" style="left:768.80px;top:645px;font-size:25px;line-height:25px;transform:scaleX(0.9550)">Ceramic capacitor, 100pF in 0402 SMD package</span>
<span class="t" style="left:1318.05px;top:644px;font-size:29px;line-height:29px;transform:scaleX(0.9542)">90</span>
<span class="t" style="left:1597.01px;top:645px;font-size:25px;line-height:25px;transform:scaleX(0.9882)">2022-7-15</span>
<span class="t" style="left:1794.16px;top:645px;font-size:25px;line-height:25px;transform:scaleX(0.9186)">Loose Parts</span>
<span class="t" style="left:2177.70px;top:645px;font-size:25px;line-height:25px;transform:scaleX(0.9009)">LCS-95887-DEK</span>
<span class="t" style="left:2687.32px;top:645px;font-size:25px;line-height:25px;transform:scaleX(0.9292)">CN¥0.8777</span>
<span class="t" style="left:2866.07px;top:645px;font-size:25px;line-height:25px;transform:scaleX(0.9332)">CN¥78.993</span>
<span class="t" style="left:1499.25px;top:649px;font-size:15.5px;line-height:15.5px;font-weight:700;color:#fff;transform:scaleX(0.9561)">OK</span>
<span class="t" style="left:278.60px;top:714px;font-size:25px;line-height:25px;transform:scaleX(0.8976)">C_100pF_0402</span>
<span class="t" style="left:768.80px;top:714px;font-size:25px;line-height:25px;transform:scaleX(0.9550)">Ceramic capacitor, 100pF in 0402 SMD package</span>
<span class="t" style="left:1318.09px;top:713px;font-size:29px;line-height:29px;transform:scaleX(0.9128)">91</span>
<span class="t" style="left:1597.01px;top:714px;font-size:25px;line-height:25px;transform:scaleX(0.9882)">2022-7-15</span>
<span class="t" style="left:1794.16px;top:714px;font-size:25px;line-height:25px;transform:scaleX(0.9186)">Loose Parts</span>
<span class="t" style="left:2177.62px;top:714px;font-size:25px;line-height:25px;transform:scaleX(0.9403)">FUT-53220-WXJ</span>
<span class="t" style="left:2687.33px;top:714px;font-size:25px;line-height:25px;transform:scaleX(0.9233)">CA$0.8028</span>
<span class="t" style="left:2866.07px;top:714px;font-size:25px;line-height:25px;transform:scaleX(0.9300)">CA$73.0548</span>
<span class="t" style="left:1499.25px;top:717px;font-size:15.5px;line-height:15.5px;font-weight:700;color:#fff;transform:scaleX(0.9561)">OK</span>
<span class="t" style="left:278.60px;top:783px;font-size:25px;line-height:25px;transform:scaleX(0.8976)">C_100pF_0402</span>
<span class="t" style="left:768.80px;top:783px;font-size:25px;line-height:25px;transform:scaleX(0.9550)">Ceramic capacitor, 100pF in 0402 SMD package</span>
<span class="t" style="left:1318.32px;top:782px;font-size:29px;line-height:29px;color:#de8020;transform:scaleX(0.9296)">300</span>
<span class="t" style="left:1794.14px;top:783px;font-size:25px;line-height:25px;transform:scaleX(0.9313)">Reel Storage</span>
<span class="t" style="left:2178.25px;top:783px;font-size:25px;line-height:25px;transform:scaleX(0.9912)">478-7887-2-ND</span>
<span class="t" style="left:2409.50px;top:783px;font-size:25px;line-height:25px;transform:scaleX(0.9024)">0402YC101KAT2A</span>
<span class="t" style="left:2867.75px;top:783px;font-size:25px;line-height:25px;transform:scaleX(0.9435)">$36.6702 - $175.2456</span>
<span class="t" style="left:1499.25px;top:786px;font-size:15.5px;line-height:15.5px;font-weight:700;color:#fff;transform:scaleX(0.9561)">OK</span>
<span class="t" style="left:278.60px;top:851px;font-size:25px;line-height:25px;transform:scaleX(0.8976)">C_100pF_0402</span>
<span class="t" style="left:768.80px;top:851px;font-size:25px;line-height:25px;transform:scaleX(0.9550)">Ceramic capacitor, 100pF in 0402 SMD package</span>
<span class="t" style="left:1318.13px;top:850px;font-size:29px;line-height:29px;color:#de8020;transform:scaleX(0.9326)">1000</span>
<span class="t" style="left:1794.14px;top:851px;font-size:25px;line-height:25px;transform:scaleX(0.9313)">Reel Storage</span>
<span class="t" style="left:2178.25px;top:851px;font-size:25px;line-height:25px;transform:scaleX(0.9912)">478-1089-2-ND</span>
<span class="t" style="left:2409.50px;top:851px;font-size:25px;line-height:25px;transform:scaleX(0.9169)">04025C101KAT2A</span>
<span class="t" style="left:2867.75px;top:851px;font-size:25px;line-height:25px;transform:scaleX(0.9408)">$122.234 - $584.152</span>
<span class="t" style="left:1471.75px;top:855px;font-size:15.5px;line-height:15.5px;font-weight:700;color:#fff;transform:scaleX(1.0138)">ATTENT…</span>
<span class="t" style="left:278.60px;top:920px;font-size:25px;line-height:25px;transform:scaleX(0.8976)">C_100pF_0402</span>
<span class="t" style="left:768.80px;top:920px;font-size:25px;line-height:25px;transform:scaleX(0.9550)">Ceramic capacitor, 100pF in 0402 SMD package</span>
<span class="t" style="left:1318.13px;top:919px;font-size:29px;line-height:29px;transform:scaleX(0.9326)">1000</span>
<span class="t" style="left:1794.14px;top:920px;font-size:25px;line-height:25px;transform:scaleX(0.9313)">Reel Storage</span>
<span class="t" style="left:2178.25px;top:920px;font-size:25px;line-height:25px;transform:scaleX(0.9912)">478-1089-2-ND</span>
<span class="t" style="left:2409.50px;top:920px;font-size:25px;line-height:25px;transform:scaleX(0.9169)">04025C101KAT2A</span>
<span class="t" style="left:2867.75px;top:920px;font-size:25px;line-height:25px;transform:scaleX(0.9408)">$122.234 - $584.152</span>
<span class="t" style="left:1499.25px;top:924px;font-size:15.5px;line-height:15.5px;font-weight:700;color:#fff;transform:scaleX(0.9561)">OK</span>
<span class="t" style="left:278.60px;top:989px;font-size:25px;line-height:25px;transform:scaleX(0.8976)">C_100pF_0402</span>
<span class="t" style="left:768.80px;top:989px;font-size:25px;line-height:25px;transform:scaleX(0.9550)">Ceramic capacitor, 100pF in 0402 SMD package</span>
<span class="t" style="left:1317.57px;top:988px;font-size:29px;line-height:29px;transform:scaleX(0.9337)">2347</span>
<span class="t" style="left:1794.14px;top:989px;font-size:25px;line-height:25px;transform:scaleX(0.9313)">Reel Storage</span>
<span class="t" style="left:2178.25px;top:989px;font-size:25px;line-height:25px;transform:scaleX(0.9912)">478-7887-2-ND</span>
<span class="t" style="left:2409.50px;top:989px;font-size:25px;line-height:25px;transform:scaleX(0.9024)">0402YC101KAT2A</span>
<span class="t" style="left:2867.75px;top:989px;font-size:25px;line-height:25px;clip-path:inset(-5px 0.03px -5px 0);transform:scaleX(0.9373)">$286.8832 - $1,371.004</span>
<span class="t" style="left:1499.25px;top:993px;font-size:15.5px;line-height:15.5px;font-weight:700;color:#fff;transform:scaleX(0.9561)">OK</span>
<span class="t" style="left:278.60px;top:1058px;font-size:25px;line-height:25px;transform:scaleX(0.8976)">C_100pF_0402</span>
<span class="t" style="left:768.80px;top:1058px;font-size:25px;line-height:25px;transform:scaleX(0.9550)">Ceramic capacitor, 100pF in 0402 SMD package</span>
<span class="t" style="left:1318.00px;top:1057px;font-size:29px;line-height:29px;transform:scaleX(0.9348)">4000</span>
<span class="t" style="left:1794.14px;top:1058px;font-size:25px;line-height:25px;transform:scaleX(0.9313)">Reel Storage</span>
<span class="t" style="left:2178.25px;top:1058px;font-size:25px;line-height:25px;transform:scaleX(0.9912)">478-1089-2-ND</span>
<span class="t" style="left:2409.50px;top:1058px;font-size:25px;line-height:25px;transform:scaleX(0.9169)">04025C101KAT2A</span>
<span class="t" style="left:2867.75px;top:1058px;font-size:25px;line-height:25px;transform:scaleX(0.9373)">$488.936 - $2,336.608</span>
<span class="t" style="left:1499.25px;top:1062px;font-size:15.5px;line-height:15.5px;font-weight:700;color:#fff;transform:scaleX(0.9561)">OK</span>
<span class="t" style="left:155.99px;top:1133px;font-size:25px;line-height:25px;transform:scaleX(1.0077)">1 - 8 / 8</span>
<span class="t" style="left:2618.84px;top:1133px;font-size:25px;line-height:25px;transform:scaleX(0.9549)">Records per page</span>
<span class="t" style="left:2847.80px;top:1134px;font-size:25px;line-height:25px;transform:scaleX(0.9458)">25</span>
<span class="t" style="left:3012.50px;top:1134px;font-size:25px;line-height:25px;color:#fff;transform:scaleX(0.6000)">1</span>
</main>
</div></body></html>
